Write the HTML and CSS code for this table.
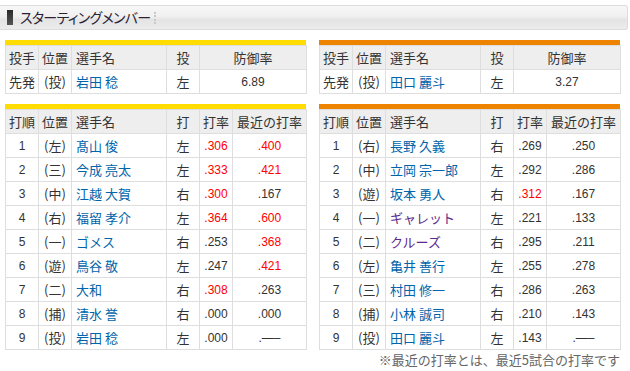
FILE: index.html
```html
<!DOCTYPE html>
<html lang="ja">
<head>
<meta charset="utf-8">
<title>スターティングメンバー</title>
<link rel="stylesheet" href="styles.css">
</head>
<body>
<div class="title-bar">
  <span class="title-mark"></span>
  <h2 class="title-text">スターティングメンバー</h2>
  <span class="title-sep"></span>
</div>

<div class="teams">
  <div class="team team-home">
    <div class="stripe"></div>
    <table class="tbl">
      <colgroup><col class="c1"><col class="c2"><col class="c3"><col class="c4"><col class="c56"></colgroup>
      <tr class="head"><th>投手</th><th>位置</th><th class="left">選手名</th><th>投</th><th>防御率</th></tr>
      <tr><td>先発</td><td>(投)</td><td class="name">岩田 稔</td><td>左</td><td class="num">6.89</td></tr>
    </table>

    <div class="stripe stripe-gap"></div>
    <table class="tbl">
      <colgroup><col class="c1"><col class="c2"><col class="c3"><col class="c4"><col class="c5"><col class="c6"></colgroup>
      <tr class="head"><th>打順</th><th>位置</th><th class="left">選手名</th><th>打</th><th>打率</th><th>最近の打率</th></tr>
      <tr><td class="num">1</td><td>(左)</td><td class="name">髙山 俊</td><td>左</td><td class="num red">.306</td><td class="num red">.400</td></tr>
      <tr><td class="num">2</td><td>(三)</td><td class="name">今成 亮太</td><td>左</td><td class="num red">.333</td><td class="num red">.421</td></tr>
      <tr><td class="num">3</td><td>(中)</td><td class="name">江越 大賀</td><td>右</td><td class="num red">.300</td><td class="num">.167</td></tr>
      <tr><td class="num">4</td><td>(右)</td><td class="name">福留 孝介</td><td>左</td><td class="num red">.364</td><td class="num red">.600</td></tr>
      <tr><td class="num">5</td><td>(一)</td><td class="name">ゴメス</td><td>右</td><td class="num">.253</td><td class="num red">.368</td></tr>
      <tr><td class="num">6</td><td>(遊)</td><td class="name">鳥谷 敬</td><td>左</td><td class="num">.247</td><td class="num red">.421</td></tr>
      <tr><td class="num">7</td><td>(二)</td><td class="name">大和</td><td>右</td><td class="num red">.308</td><td class="num">.263</td></tr>
      <tr><td class="num">8</td><td>(捕)</td><td class="name">清水 誉</td><td>右</td><td class="num">.000</td><td class="num">.000</td></tr>
      <tr><td class="num">9</td><td>(投)</td><td class="name">岩田 稔</td><td>左</td><td class="num">.000</td><td class="num">.—–</td></tr>
    </table>
  </div>

  <div class="team team-away">
    <div class="stripe"></div>
    <table class="tbl">
      <colgroup><col class="c1"><col class="c2"><col class="c3"><col class="c4"><col class="c56"></colgroup>
      <tr class="head"><th>投手</th><th>位置</th><th class="left">選手名</th><th>投</th><th>防御率</th></tr>
      <tr><td>先発</td><td>(投)</td><td class="name">田口 麗斗</td><td>左</td><td class="num">3.27</td></tr>
    </table>

    <div class="stripe stripe-gap"></div>
    <table class="tbl">
      <colgroup><col class="c1"><col class="c2"><col class="c3"><col class="c4"><col class="c5"><col class="c6"></colgroup>
      <tr class="head"><th>打順</th><th>位置</th><th class="left">選手名</th><th>打</th><th>打率</th><th>最近の打率</th></tr>
      <tr><td class="num">1</td><td>(右)</td><td class="name">長野 久義</td><td>右</td><td class="num">.269</td><td class="num">.250</td></tr>
      <tr><td class="num">2</td><td>(中)</td><td class="name">立岡 宗一郎</td><td>左</td><td class="num">.292</td><td class="num">.286</td></tr>
      <tr><td class="num">3</td><td>(遊)</td><td class="name">坂本 勇人</td><td>右</td><td class="num red">.312</td><td class="num">.167</td></tr>
      <tr><td class="num">4</td><td>(一)</td><td class="name foreign">ギャレット</td><td>左</td><td class="num">.221</td><td class="num">.133</td></tr>
      <tr><td class="num">5</td><td>(二)</td><td class="name foreign">クルーズ</td><td>右</td><td class="num">.295</td><td class="num">.211</td></tr>
      <tr><td class="num">6</td><td>(左)</td><td class="name">亀井 善行</td><td>左</td><td class="num">.255</td><td class="num">.278</td></tr>
      <tr><td class="num">7</td><td>(三)</td><td class="name">村田 修一</td><td>右</td><td class="num">.286</td><td class="num">.263</td></tr>
      <tr><td class="num">8</td><td>(捕)</td><td class="name">小林 誠司</td><td>右</td><td class="num">.210</td><td class="num">.143</td></tr>
      <tr><td class="num">9</td><td>(投)</td><td class="name">田口 麗斗</td><td>左</td><td class="num">.143</td><td class="num">.—–</td></tr>
    </table>
    <p class="note">※最近の打率とは、最近5試合の打率です</p>
  </div>
</div>
</body>
</html>
```

FILE: styles.css
```css
html, body {
  margin: 0;
  padding: 0;
  background: #fff;
}

body {
  font-family: "Noto Sans CJK JP", "Noto Sans", sans-serif;
  font-size: 13px;
  color: #333;
}

.title-bar {
  margin: 5px 2px 0 0;
  height: 23px;
  border: 1px solid #dcdcdc;
  border-left: none;
  border-radius: 0 3px 3px 0;
  background: linear-gradient(#f7f7f7 0%, #f0f0f0 45%, #e4e4e4 60%, #ececec 100%);
  display: flex;
  align-items: center;
  box-sizing: content-box;
}

.title-mark {
  width: 6px;
  height: 15px;
  margin-left: 7px;
  background: linear-gradient(#2a2a2a, #555);
}

.title-text {
  margin: 0 0 0 7px;
  font-size: 14px;
  font-weight: normal;
  color: #2b1f36;
  letter-spacing: -0.7px;
  font-feature-settings: "palt";
  line-height: 23px;
}

.title-sep {
  width: 0;
  height: 12px;
  margin-left: 4px;
  border-left: 2px dotted #c8c8c8;
}

.teams {
  display: grid;
  grid-template-columns: 301px 301px;
  column-gap: 13px;
  padding: 10px 0 0 5px;
}

.stripe {
  height: 5px;
  background: #ffdc00;
}

.team-away .stripe {
  background: #ee8300;
}

.stripe-gap {
  margin-top: 10px;
}

.tbl {
  width: 301px;
  border-collapse: collapse;
  table-layout: fixed;
}

.c1 { width: 33px; }
.c2 { width: 33px; }
.c3 { width: 95px; }
.c4 { width: 33px; }
.c5 { width: 33px; }
.c6 { width: 74px; }
.c56 { width: 107px; }

.tbl th,
.tbl td {
  border: 1px solid #dedede;
  height: 23px;
  padding: 0;
  text-align: center;
  font-weight: normal;
  white-space: nowrap;
  line-height: 16px;
}

.tbl th {
  background: #eeeeee;
}

.tbl th.left {
  text-align: left;
  padding-left: 4px;
}

.tbl td.name {
  text-align: left;
  padding-left: 4px;
  color: #0064aa;
}

.tbl td.name.foreign {
  color: #5c2a8c;
}

.tbl td.num {
  font-family: "Liberation Sans", Arial, sans-serif;
  font-size: 12px;
}

.tbl td.red {
  color: #ff0000;
}

.note {
  margin: 0;
  text-align: right;
  color: #666;
  font-size: 13px;
  line-height: 20px;
}
```
